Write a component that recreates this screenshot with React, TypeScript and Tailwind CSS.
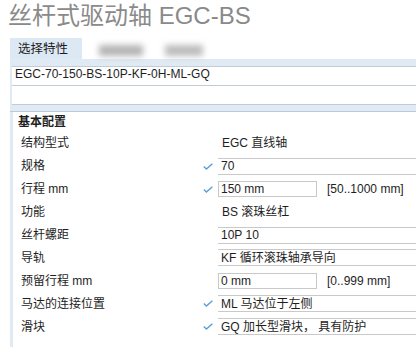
import React from 'react';

type Field =
  | { kind: 'text'; value: string }
  | { kind: 'box'; value: string }
  | { kind: 'input'; value: string; range: string };

type Row = { label: string; checked?: boolean; field: Field };

const rows: Row[] = [
  { label: '结构型式', field: { kind: 'text', value: 'EGC 直线轴' } },
  { label: '规格', checked: true, field: { kind: 'box', value: '70' } },
  { label: '行程 mm', checked: true, field: { kind: 'input', value: '150 mm', range: '[50..1000 mm]' } },
  { label: '功能', field: { kind: 'text', value: 'BS 滚珠丝杠' } },
  { label: '丝杆螺距', field: { kind: 'box', value: '10P 10' } },
  { label: '导轨', field: { kind: 'box', value: 'KF 循环滚珠轴承导向' } },
  { label: '预留行程 mm', field: { kind: 'input', value: '0 mm', range: '[0..999 mm]' } },
  { label: '马达的连接位置', checked: true, field: { kind: 'box', value: 'ML 马达位于左侧' } },
  { label: '滑块', checked: true, field: { kind: 'box', value: 'GQ 加长型滑块， 具有防护' } },
];

function Check() {
  return (
    <svg width="10" height="7" viewBox="0 0 10 7" className="block">
      <polyline points="0.8,3.6 3.4,6 9.4,0.8" fill="none" stroke="#5b9fd6" strokeWidth="1.4" />
    </svg>
  );
}

function FieldCell({ field }: { field: Field }) {
  if (field.kind === 'text') {
    return <div className="pl-1">{field.value}</div>;
  }
  if (field.kind === 'box') {
    return (
      <div className="h-[17px] border-y border-[#c9c9c9] flex items-center pl-[3px]">{field.value}</div>
    );
  }
  return (
    <div className="flex items-center">
      <div className="w-[99px] h-[16px] border border-[#c9c9c9] flex items-center pl-[2px]">{field.value}</div>
      <div className="ml-[10px]">{field.range}</div>
    </div>
  );
}

export default function App() {
  return (
    <div className="w-[416px] h-[347px] bg-white overflow-hidden text-[12px] leading-[14px] text-[#1e1e1e] font-['Liberation_Sans','Noto_Sans_CJK_SC',sans-serif]">
      {/* Title */}
      <div className="h-[38px] pl-2 pt-[2px] text-[24px] leading-[28px] text-[#8a8a8a]">丝杆式驱动轴 EGC-BS</div>

      {/* Tabs */}
      <div className="flex h-[21px] pl-[10px]">
        <div className="w-[72px] bg-[#dce8f4] flex items-center pl-2 text-[12.5px]">选择特性</div>
        <div className="w-[148px] ml-[3px] flex items-center pt-[3px]">
          <div className="ml-[14px] w-[44px] h-[11px] bg-[#b4b4b4] blur-[3px]" />
          <div className="ml-[22px] w-[38px] h-[11px] bg-[#bcbcbc] blur-[3px]" />
        </div>
      </div>

      {/* Type code panel */}
      <div className="ml-[10px] bg-[#dfeaf5] pt-[7px] pb-[6px] pl-[2px] border-b border-[#b9cad9]">
        <div className="h-[20px] bg-white border-y border-[#c4ccd3] pl-[3px]">EGC-70-150-BS-10P-KF-0H-ML-GQ</div>
        <div className="h-[19px] bg-white border-b border-[#c4ccd3]" />
      </div>

      {/* Configuration */}
      <div className="ml-[10px] border-l-[3px] border-[#dfeaf5] h-[240px]">
        <div className="h-[20px] flex items-center pl-[5px] font-bold">基本配置</div>
        {rows.map((r) => (
          <div key={r.label} className="grid grid-cols-[190px_15px_1fr] items-center h-[22.9px]">
            <div className="pl-2">{r.label}</div>
            <div>{r.checked && <Check />}</div>
            <FieldCell field={r.field} />
          </div>
        ))}
      </div>
    </div>
  );
}
